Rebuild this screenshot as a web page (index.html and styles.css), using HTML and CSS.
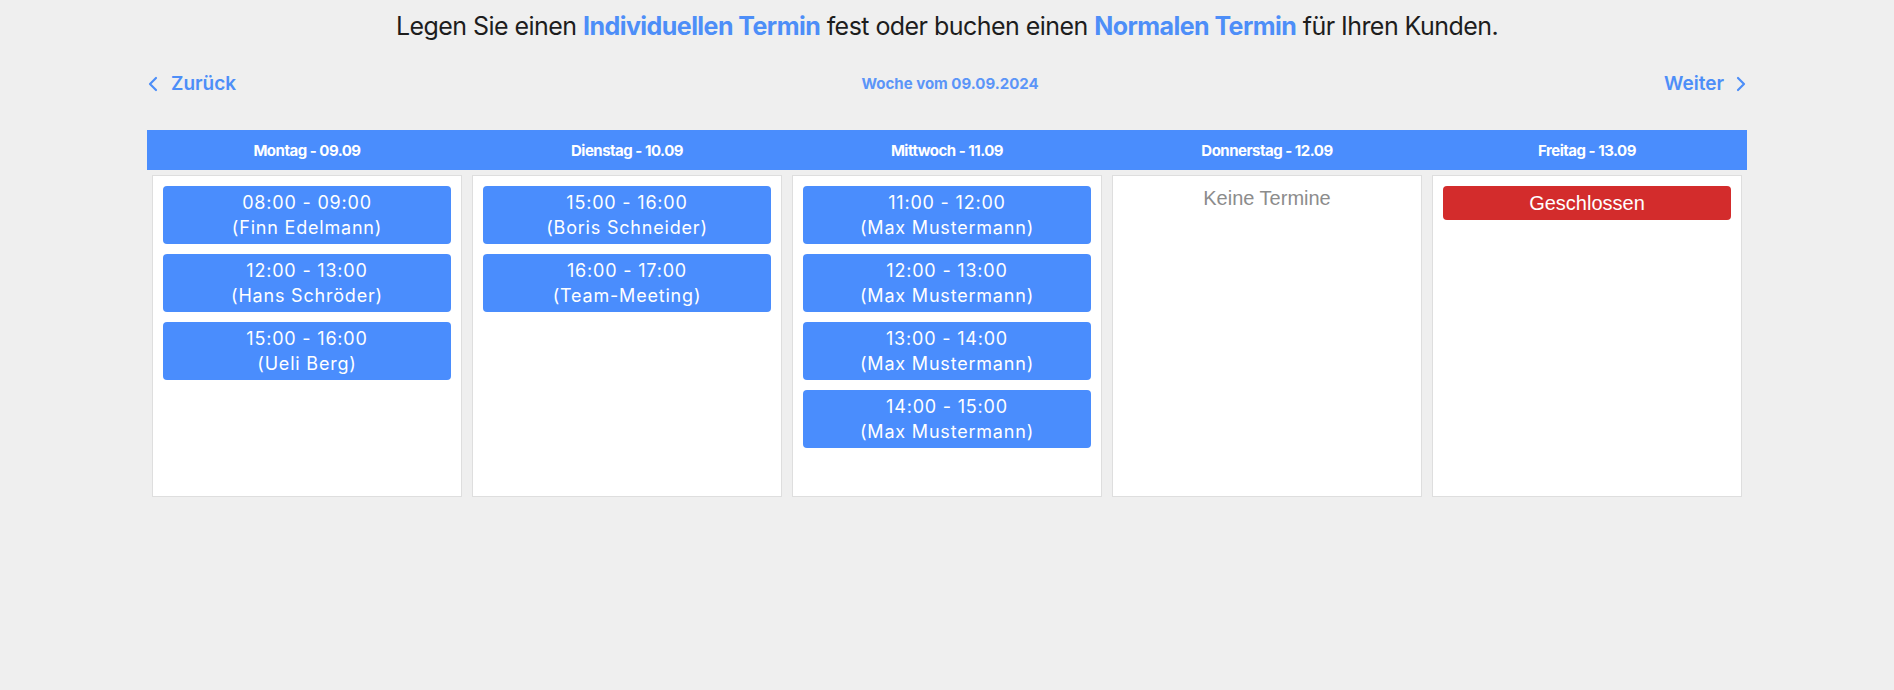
FILE: index.html
```html
<!DOCTYPE html>
<html lang="de">
<head>
<meta charset="utf-8">
<title>Termine</title>
<link rel="stylesheet" href="styles.css">
</head>
<body>
<h1 class="title">Legen Sie einen <span class="hl">Individuellen Termin</span> fest oder buchen einen <span class="hl">Normalen Termin</span> für Ihren Kunden.</h1>
<div class="wrap">
  <div class="nav">
    <a class="nav-link">
      <svg class="chev" width="12" height="16" viewBox="0 0 12 16"><polyline points="9,2 3,8 9,14" fill="none" stroke="currentColor" stroke-width="2.2" stroke-linecap="round" stroke-linejoin="round"/></svg>
      <span>Zurück</span>
    </a>
    <div class="week">Woche vom 09.09.2024</div>
    <a class="nav-link right">
      <span>Weiter</span>
      <svg class="chev" width="12" height="16" viewBox="0 0 12 16"><polyline points="3,2 9,8 3,14" fill="none" stroke="currentColor" stroke-width="2.2" stroke-linecap="round" stroke-linejoin="round"/></svg>
    </a>
  </div>
  <div class="days">
    <div class="day">Montag - 09.09</div>
    <div class="day">Dienstag - 10.09</div>
    <div class="day">Mittwoch - 11.09</div>
    <div class="day">Donnerstag - 12.09</div>
    <div class="day">Freitag - 13.09</div>
  </div>
  <div class="grid">
    <div class="card">
      <div class="slot">08:00 - 09:00<br>(Finn Edelmann)</div>
      <div class="slot">12:00 - 13:00<br>(Hans Schröder)</div>
      <div class="slot">15:00 - 16:00<br>(Ueli Berg)</div>
    </div>
    <div class="card">
      <div class="slot">15:00 - 16:00<br>(Boris Schneider)</div>
      <div class="slot">16:00 - 17:00<br>(Team-Meeting)</div>
    </div>
    <div class="card">
      <div class="slot">11:00 - 12:00<br>(Max Mustermann)</div>
      <div class="slot">12:00 - 13:00<br>(Max Mustermann)</div>
      <div class="slot">13:00 - 14:00<br>(Max Mustermann)</div>
      <div class="slot">14:00 - 15:00<br>(Max Mustermann)</div>
    </div>
    <div class="card">
      <div class="empty">Keine Termine</div>
    </div>
    <div class="card">
      <div class="closed">Geschlossen</div>
    </div>
  </div>
</div>
</body>
</html>
```

FILE: styles.css
```css
* { box-sizing: border-box; }
html, body { margin: 0; padding: 0; }
body {
  background: #efefef;
  font-family: Inter, "Noto Sans", sans-serif;
  color: #1d1d1d;
}
.title {
  margin: 0;
  padding-top: 11px;
  font-size: 25px;
  line-height: 31px;
  font-weight: 400;
  text-align: center;
  letter-spacing: -0.55px;
}
.hl { color: #4d8ef8; font-weight: 700; }
.wrap {
  width: 1600px;
  margin: 0 auto;
}
.nav {
  margin-top: 30px;
  height: 23px;
  display: flex;
  align-items: center;
  justify-content: space-between;
  color: #4d8ef8;
}
.nav-link {
  display: flex;
  align-items: center;
  gap: 12px;
  font-size: 19px;
  font-weight: 600;
  color: #4d8ef8;
}
.nav-link.right { gap: 11px; }
.week {
  font-size: 15px;
  font-weight: 700;
  color: #5b95f8;
  letter-spacing: 0;
}
.chev { display: block; }
.days {
  margin-top: 35px;
  height: 40px;
  background: #4a8dfd;
  display: grid;
  grid-template-columns: repeat(5, 1fr);
  align-items: center;
}
.day {
  text-align: center;
  color: #fff;
  font-size: 15px;
  font-weight: 700;
  letter-spacing: -0.5px;
}
.grid {
  display: grid;
  grid-template-columns: repeat(5, 1fr);
  gap: 10px;
  padding: 5px 5px 0;
}
.card {
  height: 322px;
  background: #fff;
  border: 1px solid #dedede;
  padding: 10px;
  display: flex;
  flex-direction: column;
  gap: 10px;
}
.slot {
  background: #4a8dfd;
  color: #fff;
  border-radius: 4px;
  text-align: center;
  font-size: 18px;
  line-height: 25px;
  letter-spacing: 0.8px;
  padding: 4px 0;
}
.empty {
  text-align: center;
  font-family: "Liberation Sans", Arial, sans-serif;
  font-size: 20px;
  line-height: 23px;
  color: #8c8c8c;
  padding-top: 1px;
}
.closed {
  background: #d32c2c;
  color: #fff;
  border-radius: 4px;
  text-align: center;
  font-family: "Liberation Sans", Arial, sans-serif;
  font-size: 20px;
  line-height: 24px;
  padding: 5px 0;
}
```
